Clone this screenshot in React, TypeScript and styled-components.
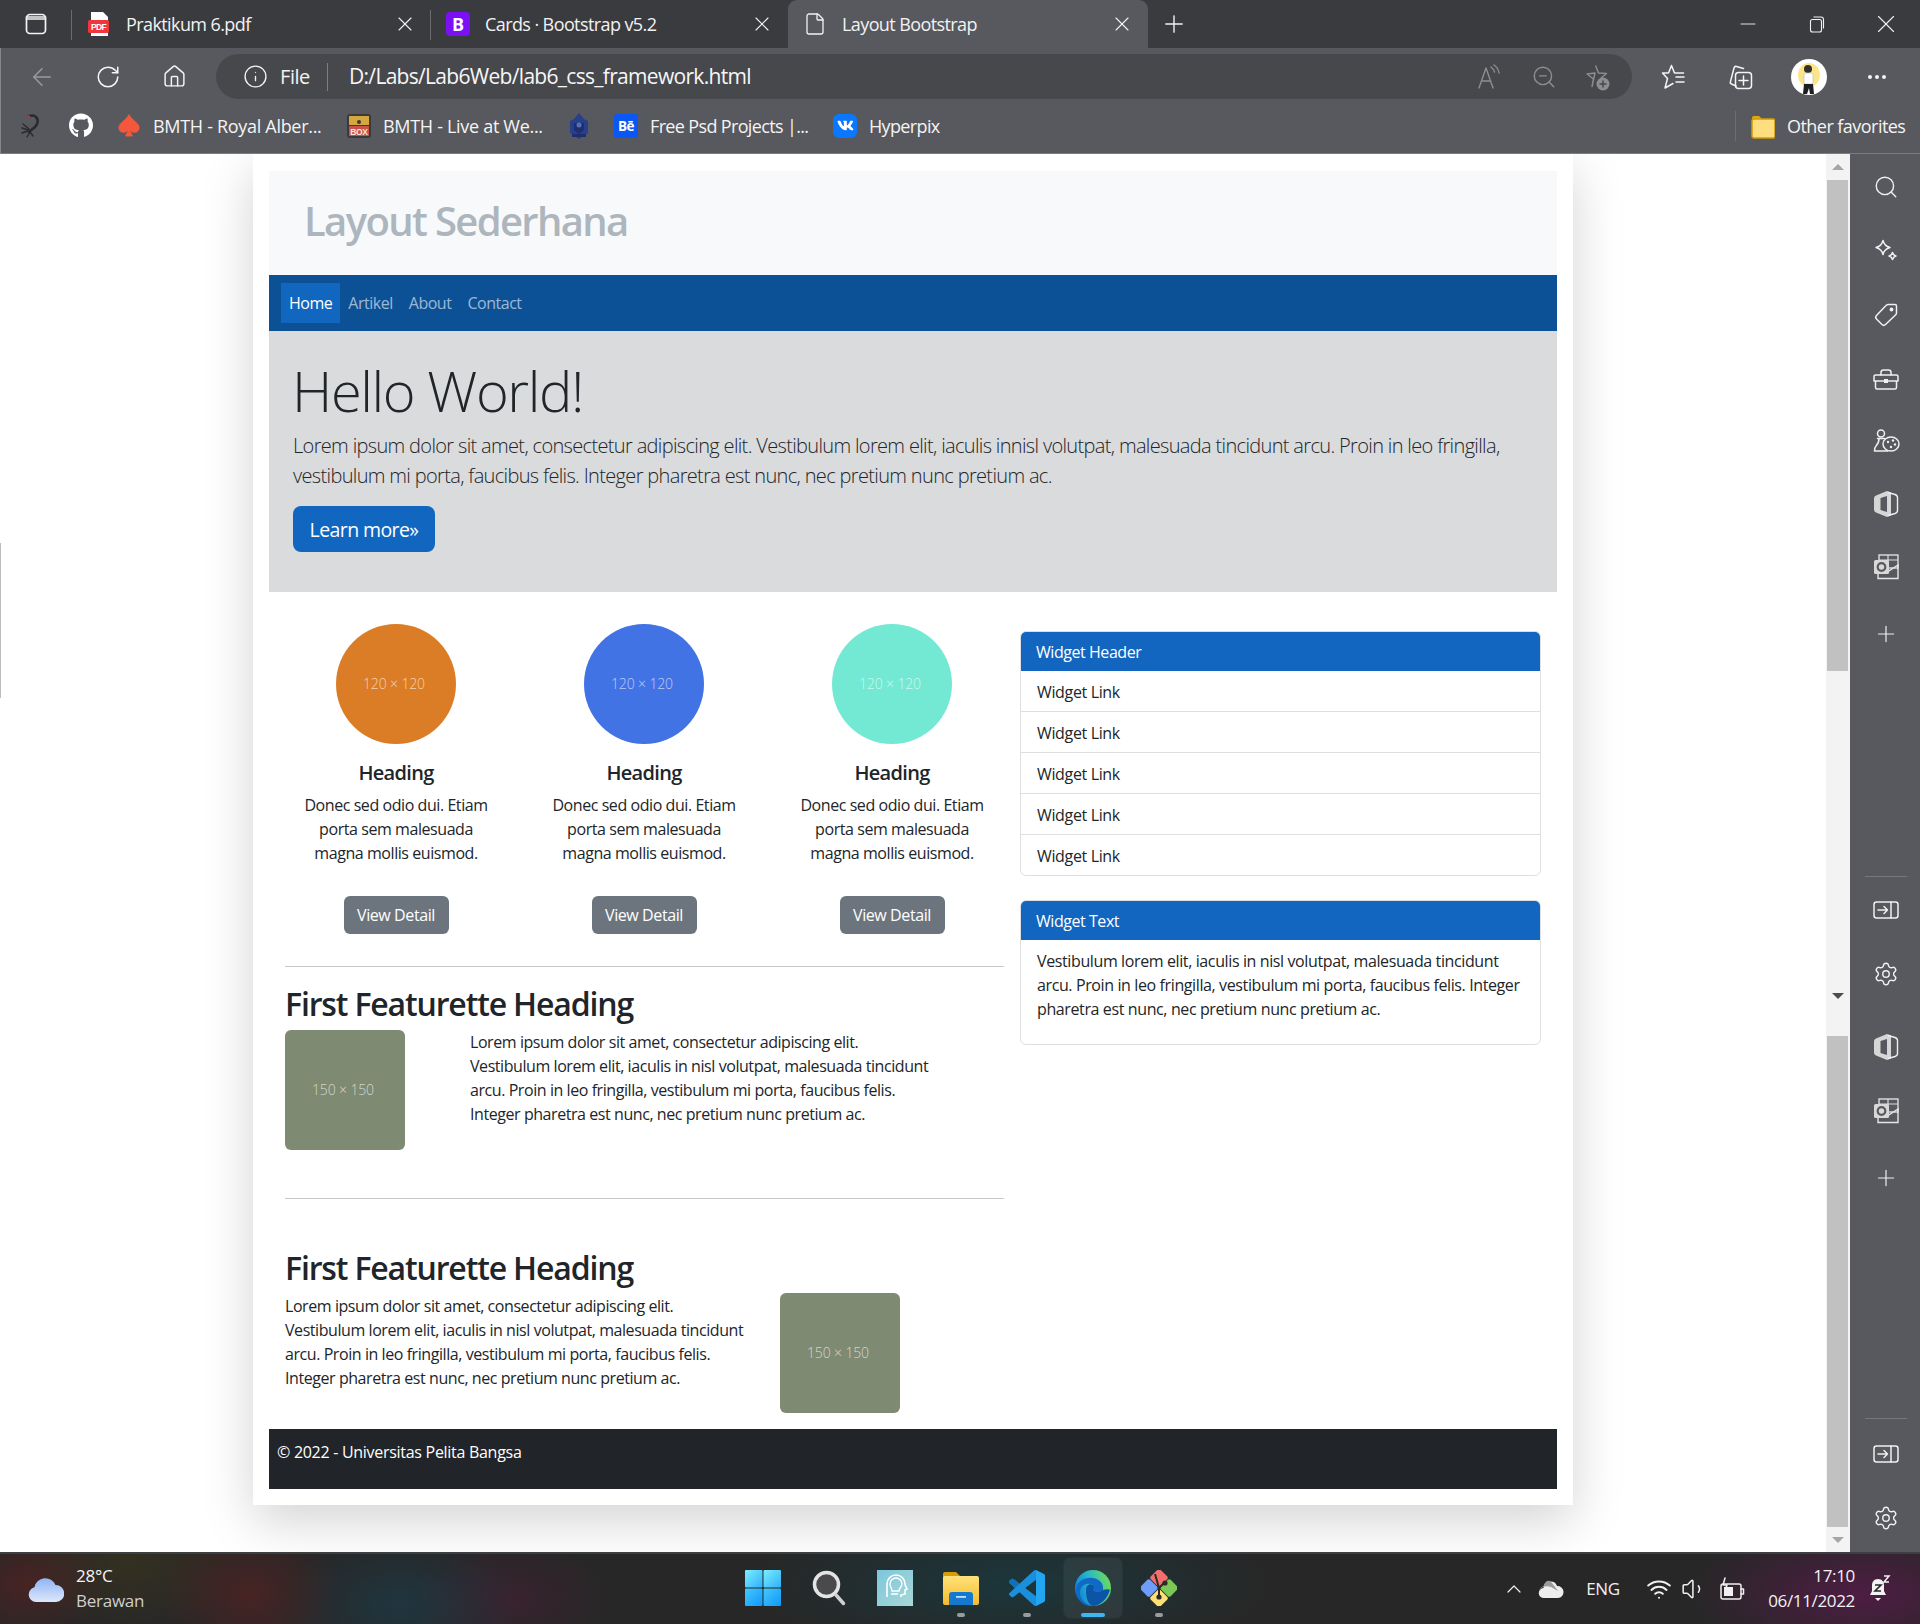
import React from "react";
import styled, { createGlobalStyle } from "styled-components";
import { ArrowLeft, RotateCw, Home, Info, Search, ZoomOut, X, Plus, File as FileIcon, Minus, Settings, ChevronUp, Wifi, Volume1, MoreHorizontal } from "lucide-react";
import { FaGithub, FaVk } from "react-icons/fa";
import { BsSuitSpadeFill } from "react-icons/bs";

const UI = `"Open Sans", "Noto Sans", "Liberation Sans", sans-serif`;

const Global = createGlobalStyle`
  html, body { margin: 0; padding: 0; background: #fff; }
  body { font-family: ${UI}; color: #212529; font-size: 16px; line-height: 24px; letter-spacing: -0.027em; }
  * { box-sizing: border-box; }
`;

const Frame = styled.div`
  width: 1920px; height: 1624px; display: flex; flex-direction: column; overflow: hidden; position: relative;
`;

/* ---------- tab strip ---------- */
const TabStrip = styled.div`
  height: 48px; flex: none; display: flex; align-items: stretch; background: #3a3b3f; color: #f2f2f2;
`;
const TabToggle = styled.div`
  width: 72px; flex: none; display: flex; align-items: center; justify-content: center; padding-right: 1px; position: relative;
  &::after { content: ""; position: absolute; right: 0; top: 10px; height: 30px; width: 1px; background: #6a6b6f; }
`;
const Tab = styled.div<{ $w: number; $active?: boolean; $sep?: boolean }>`
  width: ${p => p.$w}px; flex: none; display: flex; align-items: center; gap: 15px; padding: 0 14px 0 15px; position: relative;
  font-size: 18px; letter-spacing: -0.033em;
  background: ${p => (p.$active ? "#58595e" : "transparent")};
  border-radius: ${p => (p.$active ? "9px 9px 0 0" : "0")};
  ${p => p.$sep ? `&::after { content: ""; position: absolute; right: 0; top: 10px; height: 30px; width: 1px; background: #6a6b6f; }` : ""}
`;
const TabIconBox = styled.span`
  width: 24px; height: 26px; flex: none; display: flex; align-items: center; justify-content: center;
`;
const BootstrapMark = styled.span`
  width: 24px; height: 24px; border-radius: 4px; background: #7b10f5; color: #fff; font-weight: 700; font-size: 18px;
  display: flex; align-items: center; justify-content: center; letter-spacing: 0;
`;
const TabClose = styled.span`
  margin-left: auto; display: flex;
`;
const NewTab = styled.div`
  width: 52px; flex: none; display: flex; align-items: center; justify-content: center; margin-left: 0;
`;
const WindowControls = styled.div`
  margin-left: auto; display: flex;
`;
const WinBtn = styled.div`
  width: 69px; display: flex; align-items: center; justify-content: center;
`;

/* ---------- address row ---------- */
const AddressRow = styled.div`
  height: 54px; flex: none; display: flex; align-items: flex-start; padding: 6px 0 0 9px; background: #58595e; color: #fff;
  box-shadow: inset 1px 0 0 #85868a;
`;
const NavBtn = styled.div<{ $dim?: boolean }>`
  width: 66px; height: 45px; flex: none; display: flex; align-items: center; justify-content: center;
  color: ${p => (p.$dim ? "#9a9b9e" : "#f4f4f4")};
`;
const AddressBar = styled.div`
  width: 1416px; height: 45px; flex: none; margin-left: 9px; margin-right: 7px; border-radius: 23px; background: #47484c;
  display: flex; align-items: center; padding: 0 8px 0 27px;
`;
const SiteInfo = styled.div`
  display: flex; align-items: center; gap: 12px; font-size: 20px; color: #f2f2f2; width: 85px; height: 28px; border-right: 1px solid #7d7e81;
`;
const Url = styled.div`
  margin: 0 0 2px 21px; font-size: 21px; letter-spacing: -0.033em; color: #f6f6f6; white-space: nowrap;
`;
const BarActions = styled.div`
  margin-left: auto; display: flex;
`;
const BarAction = styled.div`
  width: 53.5px; height: 45px; display: flex; align-items: center; justify-content: center; color: #8d8e91;
`;
const ToolBtn = styled.div`
  width: 68px; height: 45px; flex: none; display: flex; align-items: center; justify-content: center; color: #f4f4f4;
`;

/* ---------- favourites ---------- */
const BookmarkBar = styled.div`
  height: 52px; flex: none; display: flex; align-items: center; padding: 0 0 4px 19px; background: #58595e; color: #f4f4f4;
  font-size: 18px; letter-spacing: -0.017em; border-bottom: 1px solid #7c7d80; box-shadow: inset 1px 0 0 #85868a;
`;
const Bookmark = styled.div<{ $w: number; $tight?: boolean }>`
  width: ${p => p.$w}px; flex: none; display: flex; align-items: center; gap: 12px; white-space: nowrap;
  ${p => (p.$tight ? "letter-spacing: -0.036em;" : "")}
`;
const BookmarkIcon = styled.span`
  width: 24px; height: 26px; flex: none; display: flex; align-items: center; justify-content: center;
`;
const OtherFavorites = styled.div`
  margin-left: auto; width: 185px; display: flex; align-items: center; gap: 12px; letter-spacing: -0.03em; white-space: nowrap;
`;
const BarDivider = styled.span`
  width: 1px; height: 30px; background: #6d6e72; margin-right: 3px;
`;

/* ---------- middle ---------- */
const Middle = styled.div`
  flex: 1; min-height: 0; display: flex;
`;
const Viewport = styled.div`
  width: 1826px; flex: none; overflow: hidden; background: #fff; position: relative;
`;
const EdgeMark = styled.div`
  position: absolute; left: 0; top: 389px; width: 1px; height: 155px; background: #bdbdbd;
`;
const Container = styled.div`
  width: 1320px; margin: 0 auto; padding: 17px 16px 16px; background: #fff; box-shadow: 0 16px 48px rgba(0,0,0,.175);
`;
const Header = styled.header`
  height: 104px; background: #f8f9fa; padding: 0 0 0 36px; display: flex; align-items: center;
`;
const Brand = styled.h1`
  margin: 0 0 4px -1px; font-size: 40px; line-height: 48px; font-weight: 600; color: #adb5bd; letter-spacing: -0.041em;
`;
const NavBar = styled.nav`
  height: 56px; background: #0c5096; display: flex; align-items: center; padding-left: 12px;
`;
const NavLink = styled.a<{ $active?: boolean }>`
  height: 40px; padding: 0 8px; display: flex; align-items: center; font-size: 16px; letter-spacing: -0.03em;
  color: ${p => (p.$active ? "#fff" : "rgba(255,255,255,.6)")};
  background: ${p => (p.$active ? "#1166c0" : "transparent")};
`;
const Hero = styled.section`
  height: 261px; background: #dadbdd; padding: 26px 24px 0;
`;
const HeroTitle = styled.h1`
  margin: 0 0 0 -1px; font-size: 56px; line-height: 67px; font-weight: 300; letter-spacing: -0.025em;
`;
const Lead = styled.p`
  margin: 7px 0 15px; font-size: 20px; line-height: 30px; font-weight: 300; letter-spacing: -0.033em; white-space: nowrap;
`;
const LearnMore = styled.a`
  width: 142px; height: 46px; padding-top: 2px; border-radius: 8px; background: #1166c0; color: #fff; font-size: 19.5px; letter-spacing: -0.03em;
  display: flex; align-items: center; justify-content: center;
`;
const Content = styled.div`
  display: flex; align-items: flex-start;
`;
const MainColumn = styled.div`
  width: 751px; flex: none; padding: 32px 16px 0;
`;
const Marketing = styled.div`
  display: grid; grid-template-columns: repeat(3, 248px); margin-left: -13px; width: 744px;
`;
const MarketingCol = styled.div`
  display: flex; flex-direction: column; align-items: center; text-align: center;
`;
const Circle = styled.div<{ $bg: string }>`
  width: 120px; height: 120px; border-radius: 50%; background: ${p => p.$bg}; display: flex; align-items: center; justify-content: center;
`;
const PlaceholderText = styled.span`
  font-size: 14px; font-weight: 300; color: rgba(255,255,255,.66); padding-right: 4px; letter-spacing: -0.01em;
`;
const ColHeading = styled.h5`
  margin: 17px 0 8px; font-size: 20px; line-height: 24px; font-weight: 600; letter-spacing: -0.035em;
`;
const ColText = styled.p`
  margin: 0; white-space: nowrap;
`;
const DetailBtn = styled.a`
  margin-top: 31px; width: 105px; height: 38px; border-radius: 6px; background: #6c757d; color: #fff;
  display: flex; align-items: center; justify-content: center; letter-spacing: -0.025em; font-size: 16px;
`;
const Rule = styled.hr<{ $top: number }>`
  margin: ${p => p.$top}px 0 0; border: 0; height: 1px; background: #c8c8c8;
`;
const FeatHeading = styled.h2<{ $top: number; $bottom: number }>`
  margin: ${p => p.$top}px 0 ${p => p.$bottom}px; font-size: 32px; line-height: 38px; font-weight: 600; letter-spacing: -0.036em;
`;
const Feature = styled.div`
  display: flex; align-items: flex-start;
`;
const FeatureImage = styled.div<{ $mr?: number }>`
  width: 120px; height: 120px; flex: none; border-radius: 6px; background: #7f8a72; display: flex; align-items: center; justify-content: center;
  margin-right: ${p => p.$mr ?? 0}px;
`;
const FeatureText = styled.p<{ $w?: number; $mt?: number }>`
  margin: ${p => p.$mt ?? 0}px 0 0; white-space: nowrap; width: ${p => (p.$w ? p.$w + "px" : "auto")}; flex: none;
`;
const SideColumn = styled.aside`
  width: 521px; flex: none; padding-top: 39px;
`;
const Card = styled.div`
  border: 1px solid #dedfe0; border-radius: 6px; overflow: hidden; margin-bottom: 24px; background: #fff;
`;
const CardHeader = styled.div`
  height: 40px; margin: -1px -1px 0; background: #1266bf; color: #fff; display: flex; align-items: center; padding: 2px 0 0 16px;
  font-size: 16px; letter-spacing: -0.028em;
`;
const CardRow = styled.div`
  height: 41px; display: flex; align-items: center; padding: 2px 0 0 16px; border-top: 1px solid #dedfe0; font-size: 16px; letter-spacing: -0.022em;
  &:nth-child(2) { border-top: 0; height: 40px; }
`;
const CardBody = styled.div`
  padding: 9px 16px 23px; white-space: nowrap; letter-spacing: -0.024em;
`;
const Footer = styled.footer`
  height: 60px; margin-top: 16px; background: #212529; color: #fff; padding: 11px 8px 0; letter-spacing: -0.018em; font-size: 16px;
`;

/* ---------- scrollbar & side bar ---------- */
const Scrollbar = styled.div`
  width: 24px; flex: none; display: flex; flex-direction: column; align-items: center; background: #f3f3f3; padding-right: 1px;
`;
const ScrollEnd = styled.div<{ $h: number }>`
  height: ${p => p.$h}px; flex: none; display: flex; align-items: center; justify-content: center;
`;
const ScrollThumb = styled.div`
  width: 21px; height: 491px; flex: none; background: #c1c1c1;
`;
const ScrollGap = styled.div`
  height: 365px; flex: none; display: flex; align-items: flex-end; padding-bottom: 37px;
`;
const Arrow = styled.span<{ $up?: boolean; $dark?: boolean }>`
  width: 0; height: 0; border-left: 6px solid transparent; border-right: 6px solid transparent;
  ${p => (p.$up ? "border-bottom" : "border-top")}: 6px solid ${p => (p.$dark ? "#4c4c4c" : "#a6a6a6")};
`;
const SideBar = styled.div`
  width: 70px; flex: none; background: #58595e; display: flex; flex-direction: column; align-items: center; padding: 1px 0 5px 1px; color: #f0f0f0;
`;
const SideItem = styled.div<{ $h?: number }>`
  height: ${p => p.$h ?? 64}px; flex: none; display: flex; align-items: center; justify-content: center;
`;
const SideRule = styled.div<{ $auto?: boolean; $top?: number }>`
  width: 42px; height: 1px; flex: none; background: #77787c; margin-top: ${p => (p.$auto ? "auto" : (p.$top ?? 0) + "px")};
`;

/* ---------- taskbar ---------- */
const Taskbar = styled.div`
  height: 72px; flex: none; display: flex; color: #fff; border-top: 2px solid #3d4042;
  background:
    radial-gradient(ellipse 80px 60px at 25px 30px, rgba(110,30,30,.45), transparent),
    radial-gradient(ellipse 90px 70px at 250px 40px, rgba(120,30,30,.4), transparent),
    radial-gradient(ellipse 110px 70px at 130px 10px, rgba(80,70,20,.3), transparent),
    radial-gradient(ellipse 120px 70px at 400px 50px, rgba(20,75,100,.4), transparent),
    radial-gradient(ellipse 100px 60px at 510px 45px, rgba(90,25,60,.35), transparent),
    radial-gradient(ellipse 260px 70px at 1010px 30px, rgba(15,70,80,.5), transparent),
    radial-gradient(ellipse 170px 70px at 1860px 40px, rgba(110,20,90,.55), transparent),
    #272727;
`;
const Weather = styled.div`
  width: 730px; flex: none; display: flex; align-items: center; gap: 12px; padding-left: 28px;
`;
const WeatherText = styled.div`
  font-size: 17px; line-height: 25px; letter-spacing: -0.015em; color: #f4f4f4; margin-bottom: 3px;
`;
const WeatherSub = styled.div`
  color: #cfcfcf;
`;
const TaskIcons = styled.div`
  display: flex; width: 462px; flex: none;
`;
const TaskSlot = styled.div<{ $on?: boolean }>`
  width: 66px; height: 60px; margin-top: 4px; flex: none; position: relative; display: flex; align-items: center; justify-content: center;
  ${p => (p.$on ? "background: rgba(255,255,255,.06); border-radius: 6px; width: 58px; margin-left: 4px; margin-right: 4px; box-shadow: 0 0 0 1px rgba(255,255,255,.03);" : "")}
`;
const RunDot = styled.span<{ $on?: boolean }>`
  position: absolute; bottom: 1px; left: 50%; transform: translateX(-50%); height: 4px; border-radius: 2px;
  width: ${p => (p.$on ? "24px" : "8px")}; background: ${p => (p.$on ? "#3fb6f4" : "#9a9c9c")};
`;
const Tray = styled.div`
  margin-left: auto; width: 420px; display: flex; flex: none; align-items: center;
`;
const TraySlot = styled.div<{ $w: number }>`
  width: ${p => p.$w}px; flex: none; display: flex; align-items: center; justify-content: center; font-size: 17px; letter-spacing: -0.02em; color: #f0f0f0;
  & > svg { flex: none; }
`;
const Clock = styled.div`
  width: 93px; flex: none; text-align: right; font-size: 17px; line-height: 25px; letter-spacing: -0.02em; color: #f2f2f2; margin-bottom: 2px;
`;

/* ---------- drawn icons ---------- */
const sw = { fill: "none", stroke: "currentColor", strokeWidth: 1.5, strokeLinecap: "round" as const, strokeLinejoin: "round" as const };

const TabsIcon = () => (
  <svg width="24" height="24" viewBox="0 0 24 24" {...sw} strokeWidth={1.7}><rect x="2.5" y="2.5" width="19" height="19" rx="3.5" /><path d="M2.5 7h19M2.5 5h19" /></svg>
);
const PdfIcon = () => (
  <svg width="24" height="26" viewBox="0 0 24 26"><path d="M4 1h12l5 5v19H4z" fill="#fff" /><rect x="1" y="9" width="21" height="13" rx="1.5" fill="#f0363c" /><text x="11.5" y="19" fontSize="8.5" fontWeight="700" fontFamily="Liberation Sans, sans-serif" textAnchor="middle" fill="#fff">PDF</text></svg>
);
const RestoreIcon = () => (
  <svg width="18" height="18" viewBox="0 0 18 18" fill="none" stroke="#f2f2f2" strokeWidth="1.1"><rect x="2.5" y="4.5" width="11" height="12.5" rx="2" /><path d="M5.5 2h7.5a2.5 2.5 0 0 1 2.5 2.5v9" /></svg>
);
const ReadAloudIcon = () => (
  <svg width="28" height="28" viewBox="0 0 28 28" {...sw} strokeWidth={1.4}><path d="M3 25 10 5l7 20M5.5 18h9" /><path d="M15 4c2 1.500 3 3 3.500 5M18 2c3 2 4.500 4 5 8" /></svg>
);
const StarAddIcon = () => (
  <svg width="28" height="28" viewBox="0 0 28 28" fill="none" stroke="currentColor" strokeWidth="1.4" strokeLinejoin="round"><path d="M12.500 2.500 15.500 10l8 .5-6 5 1 3M9 23.500l1.500-7.500-6.500-5 8-1z" /><circle cx="20" cy="21" r="6.500" fill="currentColor" stroke="none" /><path d="M20 17.500v7M16.500 21h7" stroke="#47484c" strokeWidth="1.500" /></svg>
);
const FavoritesIcon = () => (
  <svg width="28" height="28" viewBox="0 0 28 28" {...sw}><path d="M12.500 2.500 15.500 10h9M17 14h8M17 19h8M12.500 2.500 9.500 10H3.500l5 5.500L6 25l8-4.500" /></svg>
);
const CollectionsIcon = () => (
  <svg width="28" height="28" viewBox="0 0 28 28" {...sw}><path d="M9 23 4.500 21c-1-.5-1.500-1.500-1-2.500L7 5c.3-1 1.500-1.800 2.500-1.500l7 2" /><rect x="8.500" y="9.500" width="16" height="16" rx="3" /><path d="M16.500 13v9M12 17.500h9" /></svg>
);
const Avatar = () => (
  <svg width="36" height="36" viewBox="0 0 36 36"><circle cx="18" cy="18" r="18" fill="#fff" /><ellipse cx="18" cy="16" rx="11" ry="12" fill="#fbe58a" /><circle cx="17" cy="10" r="4" fill="#33302e" /><rect x="13" y="14" width="9" height="11" rx="2" fill="#fff" stroke="#bbb" strokeWidth=".6" /><path d="M13 25h9l1 10h-4l-1-6-2 6h-4z" fill="#1d1d22" /></svg>
);
const ScorpionIcon = () => (
  <svg width="24" height="26" viewBox="0 0 24 26" fill="none" stroke="#2a2a2c" strokeLinecap="round"><path d="M10 3c7-2 10 3 8 8s-6 5-8 8" strokeWidth="2.600" /><path d="M3 15l6 2M3 20l6-2M8 24l3-5M14 23l-3-4M4 11l6 5" strokeWidth="1.400" /><circle cx="10" cy="3.500" r="1" fill="#e0443c" stroke="none" /></svg>
);
const BoxIcon = () => (
  <svg width="24" height="26" viewBox="0 0 24 26"><rect x="0" y="1" width="24" height="24" rx="3" fill="#3b3a38" /><rect x="2" y="3" width="20" height="9" fill="#d3a83e" /><rect x="2" y="13" width="20" height="10" fill="#c9514a" /><text x="12" y="22" textAnchor="middle" fontSize="8.500" fontWeight="700" fontFamily="Liberation Sans, sans-serif" fill="#f5e9d5">BOX</text><circle cx="12" cy="9" r="2" fill="#3b3a38" /></svg>
);
const EmblemIcon = () => (
  <svg width="24" height="26" viewBox="0 0 24 26"><path d="M12 0l5 6 4 2v12l-9 6-9-6V8l4-2z" fill="#27408b" /><path d="M7 10h10v7l-5 4-5-4z" fill="#1f2f6e" /><circle cx="12" cy="12" r="2.500" fill="#5c6fb0" /><path d="M5 21h14v3H5z" fill="#1f2f6e" /></svg>
);
const BehanceMark = styled.span`
  width: 24px; height: 24px; border-radius: 3px; background: #0a57f5; color: #fff; font-size: 13.500px; font-weight: 700; letter-spacing: -0.03em;
  display: flex; align-items: center; justify-content: center;
`;
const VkMark = styled.span`
  width: 24px; height: 24px; border-radius: 6px; background: #0a77ff; color: #fff; display: flex; align-items: center; justify-content: center;
`;
const FolderIcon = () => (
  <svg width="24" height="26" viewBox="0 0 24 26"><path d="M1 5a2 2 0 0 1 2-2h5l3 3v3H1z" fill="#e2a80e" /><rect x="1" y="6" width="23" height="19" rx="2" fill="#ffde7f" stroke="#cf9a09" strokeWidth="1.500" /></svg>
);
const SparkleIcon = () => (
  <svg width="26" height="26" viewBox="0 0 26 26" {...sw}><path d="M10 2.500c1 4 3 6 7 7-4 1-6 3-7 7-1-4-3-6-7-7 4-1 6-3 7-7z" /><path d="M19.500 14.500c.5 2 1.500 3 3.500 3.500-2 .5-3 1.500-3.500 3.500-.5-2-1.500-3-3.500-3.500 2-.5 3-1.500 3.500-3.500z" /></svg>
);
const TagIcon = () => (
  <svg width="26" height="26" viewBox="0 0 26 26" {...sw}><path d="M15 2.500h7a1.500 1.500 0 0 1 1.500 1.500v7a3 3 0 0 1-1 2L12.500 22.500a2.500 2.500 0 0 1-3.500 0L3.500 17a2.500 2.500 0 0 1 0-3.500L13 3.500a3 3 0 0 1 2-1z" /><circle cx="18.500" cy="7.500" r="1.200" fill="currentColor" /></svg>
);
const ToolboxIcon = () => (
  <svg width="28" height="26" viewBox="0 0 28 26" {...sw}><path d="M2 10.500a1.500 1.500 0 0 1 1.500-1.500h21a1.500 1.500 0 0 1 1.500 1.500V15H2zM3.500 15v6.500a1.500 1.500 0 0 0 1.500 1.500h18a1.500 1.500 0 0 0 1.500-1.500V15" /><path d="M9 9V6.500A2.500 2.500 0 0 1 11.500 4h5A2.500 2.500 0 0 1 19 6.500V9" /><rect x="12" y="13" width="4" height="4" fill="currentColor" stroke="none" /></svg>
);
const GamesIcon = () => (
  <svg width="28" height="26" viewBox="0 0 28 26" {...sw}><circle cx="9" cy="5.500" r="3.500" /><path d="M5.500 10.500h7M7 10.500c0 3.500-1 5.500-3 7.500-1 1-1.500 2.500-1.500 5h13" /><ellipse cx="19" cy="16" rx="8" ry="7" /><circle cx="16" cy="14" r="1.200" fill="currentColor" stroke="none" /><circle cx="21" cy="12.500" r="1.200" fill="currentColor" stroke="none" /><circle cx="23" cy="16.500" r="1.200" fill="currentColor" stroke="none" /><circle cx="19" cy="19" r="1.200" fill="currentColor" stroke="none" /></svg>
);
const OfficeIcon = () => (
  <svg width="26" height="28" viewBox="0 0 26 28"><path d="M14 1 3 5.500c-1 .4-2 1.500-2 3v11c0 1.500 1 2.600 2 3L14 27l4-1.500V2.500z" fill="#d6d6d6" /><path d="M14 6 7.500 8v12L14 22z" fill="#58595e" /><path d="M15 2.500 22 4.500c1.500.5 2.500 1.500 2.500 3v13c0 1.500-1 2.500-2.500 3l-7 2" fill="none" stroke="#f0f0f0" strokeWidth="1.400" /></svg>
);
const OutlookIcon = () => (
  <svg width="26" height="26" viewBox="0 0 26 26"><rect x="6" y="1" width="19" height="13" fill="none" stroke="#ddd" strokeWidth="1.400" /><path d="M15 1v8M6 6h19" stroke="#ddd" strokeWidth="1.200" /><path d="M5 16v8.500h20V11l-10 6.500z" fill="none" stroke="#e6e6e6" strokeWidth="1.400" /><rect x="1" y="6" width="15" height="14" rx="1.500" fill="#d8d8d8" /><circle cx="8.500" cy="13" r="3.800" fill="none" stroke="#58595e" strokeWidth="2.200" /></svg>
);
const PanelIcon = () => (
  <svg width="26" height="20" viewBox="0 0 26 20" {...sw}><rect x="1" y="2" width="24" height="16" rx="2.500" /><path d="M18 2v16M5 10h9M11 6.500l3.500 3.500-3.500 3.500" /></svg>
);
const CloudWeather = () => (
  <svg width="36" height="30" viewBox="0 0 36 30"><defs><linearGradient id="cw" x1="0" y1="0" x2="0" y2="1"><stop offset="0" stopColor="#8fb4f5" /><stop offset="1" stopColor="#dde8fb" /></linearGradient></defs><path d="M8 28a7.500 7.500 0 0 1-1.500-14.800A11 11 0 0 1 27.500 11 8.500 8.500 0 0 1 28 28z" fill="url(#cw)" /></svg>
);
const WinLogo = () => (
  <svg width="36" height="36" viewBox="0 0 36 36"><defs><linearGradient id="w1" x1="0" y1="0" x2="1" y2="1" gradientUnits="objectBoundingBox"><stop offset="0" stopColor="#7beeff" /><stop offset="1" stopColor="#2fb0f8" /></linearGradient><linearGradient id="w2" x1="0" y1="0" x2="1" y2="1"><stop offset="0" stopColor="#45c8fb" /><stop offset="1" stopColor="#0f98fa" /></linearGradient></defs><rect x="0" y="0" width="17.500" height="17.500" rx="1" fill="url(#w1)" /><rect x="18.500" y="0" width="17.500" height="17.500" rx="1" fill="url(#w1)" /><rect x="0" y="18.500" width="17.500" height="17.500" rx="1" fill="url(#w2)" /><rect x="18.500" y="18.500" width="17.500" height="17.500" rx="1" fill="url(#w2)" /></svg>
);
const SearchTask = () => (
  <svg width="34" height="36" viewBox="0 0 34 36" fill="none"><circle cx="14.500" cy="14.500" r="12" fill="#4a4a4c" stroke="#e4e4e4" strokeWidth="3.500" /><path d="M24 25l7.500 8.500" stroke="#d0d0d0" strokeWidth="3.500" strokeLinecap="round" /></svg>
);
const NotesTask = () => (
  <svg width="36" height="36" viewBox="0 0 36 36" fill="none"><defs><linearGradient id="nt" x1="0" y1="0" x2="1" y2="1"><stop offset="0" stopColor="#7cc6de" /><stop offset="1" stopColor="#a9d8d6" /></linearGradient></defs><rect width="36" height="36" fill="url(#nt)" /><path d="M10 27V14a9 9 0 0 1 18 0c0 2 2 4 2 5l-2 1v4l-4 1v2" stroke="#fff" strokeWidth="1.600" /><path d="M14 24h7M15 21c0-3-2-4-2-7a6 6 0 0 1 12 0c0 3-3 4-3 7z" stroke="#fff" strokeWidth="1.400" /></svg>
);
const FolderTask = () => (
  <svg width="36" height="36" viewBox="0 0 36 36"><defs><linearGradient id="ft" x1="0" y1="0" x2="0" y2="1"><stop offset="0" stopColor="#ffe27a" /><stop offset="1" stopColor="#f6bb2e" /></linearGradient></defs><path d="M0 4a2 2 0 0 1 2-2h11l4 4v6H0z" fill="#d99e07" /><path d="M0 8a2 2 0 0 1 2-2h32a2 2 0 0 1 2 2v25a2 2 0 0 1-2 2H2a2 2 0 0 1-2-2z" fill="url(#ft)" /><path d="M6 35V25a3 3 0 0 1 3-3h18a3 3 0 0 1 3 3v10z" fill="#1778cf" /><rect x="13" y="26" width="10" height="1.800" fill="#bfe0ff" /></svg>
);
const CodeTask = () => (
  <svg width="36" height="36" viewBox="0 0 100 100"><path fillRule="evenodd" d="M70.900 99.300a6.200 6.200 0 0 0 4.900-.2l20.600-9.900a6.200 6.200 0 0 0 3.600-5.600V16.400a6.200 6.200 0 0 0-3.600-5.600L75.800.9a6.200 6.200 0 0 0-7.100 1.200L29.400 38 12.200 25a4.200 4.200 0 0 0-5.300.2l-5.500 5a4.200 4.200 0 0 0 0 6.200L16.300 50 1.400 63.600a4.200 4.200 0 0 0 0 6.200l5.500 5a4.200 4.200 0 0 0 5.300.2l17.200-13 39.300 35.900a6.200 6.200 0 0 0 2.200 1.400zM75 27.300 45.100 50 75 72.700z" fill="#1c8fdc" /><path d="M75 0.500 75.800.9l20.600 9.900a6.200 6.200 0 0 1 3.600 5.600v67.200a6.200 6.200 0 0 1-3.600 5.600l-20.600 9.900-.8.400z" fill="#22a6f2" /><path d="M12.200 25a4.200 4.200 0 0 0-5.300.2l-5.500 5a4.200 4.200 0 0 0 0 6.200L16.300 50l13-12z" fill="#0f6fb8" /></svg>
);
const EdgeTask = () => (
  <svg width="38" height="38" viewBox="0 0 38 38"><defs><linearGradient id="e1" x1="0" y1="0.600" x2="1" y2="0.300"><stop offset="0" stopColor="#0f7ed8" /><stop offset="0.450" stopColor="#27b6cf" /><stop offset="1" stopColor="#6fdc55" /></linearGradient></defs><circle cx="19" cy="19" r="18" fill="url(#e1)" /><path d="M2 21C3 11 12 8 19 9c7 1 11 6 10 12-3 2-8 2-10 0 2-1 2-3 0-5-4-3-12-1-13 6-1 7 5 14 13 15-9 1-17-6-17-16z" fill="#1069c4" /><path d="M12 21c0-5 4-7 7-5 2 2 2 4 0 5 2 2 7 2 10 0 3-1 6-1 7 0-3 10-11 16-17 16-5-1-7-8-7-16z" fill="#0c55a6" /></svg>
);
const GitTask = () => (
  <svg width="36" height="36" viewBox="0 0 36 36"><g transform="rotate(45 18 18)"><rect x="4" y="4" width="13.500" height="13.500" rx="2" fill="#f36f6b" /><rect x="18.500" y="4" width="13.500" height="13.500" rx="2" fill="#7cc855" /><rect x="4" y="18.500" width="13.500" height="13.500" rx="2" fill="#6f9dfb" /><rect x="18.500" y="18.500" width="13.500" height="13.500" rx="2" fill="#ffe074" /></g><path d="M14 4l4 14 5-5M18 18v9" stroke="#2d2a2a" strokeWidth="2" fill="none" /><circle cx="24" cy="13" r="2.600" fill="#2d2a2a" /><circle cx="18" cy="27" r="2.600" fill="#2d2a2a" /></svg>
);
const OneDriveTray = () => (
  <svg width="26" height="22" viewBox="0 0 26 22"><path d="M6 20a5 5 0 0 1-.5-10A7 7 0 0 1 19 8a6 6 0 0 1 1 12z" fill="#eee" /><path d="M1 13C3 9 8 7 13 9l7 4-6-8C11 1 7 3 5.500 8 3 9 1.500 11 1 13z" fill="#9b9b9b" /></svg>
);
const BatteryTray = () => (
  <svg width="28" height="26" viewBox="0 0 28 26" {...sw}><rect x="3" y="8" width="20" height="15" rx="2" /><path d="M23 13h2.500v5H23" /><rect x="6" y="11" width="9" height="9" fill="currentColor" stroke="none" /><path d="M7 2 5 9h4l-2 6" strokeWidth="1.500" /></svg>
);
const BellTray = () => (
  <svg width="26" height="30" viewBox="0 0 26 30" fill="none"><path d="M12 5c-4 0-6 3-6 6v6l-2 4h16l-2-4v-6c0-3-2-6-6-6z" fill="#f2f2f2" /><path d="M9 24h6l-3 3z" fill="#f2f2f2" /><path d="M9 11h6l-6 6h6" stroke="#272727" strokeWidth="1.600" /><path d="M18 2h5l-5 6h5" stroke="#f2f2f2" strokeWidth="1.500" /></svg>
);

const lorem = (
  <>Lorem ipsum dolor sit amet, consectetur adipiscing elit.<br />Vestibulum lorem elit, iaculis in nisl volutpat, malesuada tincidunt<br />arcu. Proin in leo fringilla, vestibulum mi porta, faucibus felis.<br />Integer pharetra est nunc, nec pretium nunc pretium ac.</>
);

const circles = ["#db7d26", "#4173e4", "#73e9d4"];

export default function App() {
  return (
    <Frame>
      <Global />
      <TabStrip>
        <TabToggle><TabsIcon /></TabToggle>
        <Tab $w={359} $sep>
          <TabIconBox><PdfIcon /></TabIconBox>Praktikum 6.pdf
          <TabClose><X size={24} strokeWidth={1.1} /></TabClose>
        </Tab>
        <Tab $w={357}>
          <TabIconBox><BootstrapMark>B</BootstrapMark></TabIconBox>Cards · Bootstrap v5.2
          <TabClose><X size={24} strokeWidth={1.1} /></TabClose>
        </Tab>
        <Tab $w={360} $active>
          <TabIconBox><FileIcon size={24} strokeWidth={1.3} /></TabIconBox>Layout Bootstrap
          <TabClose><X size={24} strokeWidth={1.1} /></TabClose>
        </Tab>
        <NewTab><Plus size={28} strokeWidth={1.2} /></NewTab>
        <WindowControls>
          <WinBtn><Minus size={24} strokeWidth={.9} /></WinBtn>
          <WinBtn><RestoreIcon /></WinBtn>
          <WinBtn><X size={30} strokeWidth={.9} /></WinBtn>
        </WindowControls>
      </TabStrip>

      <AddressRow>
        <NavBtn $dim><ArrowLeft size={28} strokeWidth={1.3} /></NavBtn>
        <NavBtn><RotateCw size={26} strokeWidth={1.4} /></NavBtn>
        <NavBtn><Home size={25} strokeWidth={1.4} /></NavBtn>
        <AddressBar>
          <SiteInfo><Info size={25} strokeWidth={1.3} />File</SiteInfo>
          <Url>D:/Labs/Lab6Web/lab6_css_framework.html</Url>
          <BarActions>
            <BarAction><ReadAloudIcon /></BarAction>
            <BarAction><ZoomOut size={26} strokeWidth={1.3} /></BarAction>
            <BarAction><StarAddIcon /></BarAction>
          </BarActions>
        </AddressBar>
        <ToolBtn><FavoritesIcon /></ToolBtn>
        <ToolBtn><CollectionsIcon /></ToolBtn>
        <ToolBtn><Avatar /></ToolBtn>
        <ToolBtn><MoreHorizontal size={24} strokeWidth={2} /></ToolBtn>
      </AddressRow>

      <BookmarkBar>
        <Bookmark $w={50}><BookmarkIcon><ScorpionIcon /></BookmarkIcon></Bookmark>
        <Bookmark $w={48}><BookmarkIcon><FaGithub size={25} color="#fff" /></BookmarkIcon></Bookmark>
        <Bookmark $w={230}><BookmarkIcon><BsSuitSpadeFill size={24} color="#f4573c" /></BookmarkIcon>BMTH - Royal Alber...</Bookmark>
        <Bookmark $w={220}><BookmarkIcon><BoxIcon /></BookmarkIcon>BMTH - Live at We...</Bookmark>
        <Bookmark $w={47}><BookmarkIcon><EmblemIcon /></BookmarkIcon></Bookmark>
        <Bookmark $w={219} $tight><BookmarkIcon><BehanceMark>Bē</BehanceMark></BookmarkIcon>Free Psd Projects |...</Bookmark>
        <Bookmark $w={120} $tight><BookmarkIcon><VkMark><FaVk size={17} /></VkMark></BookmarkIcon>Hyperpix</Bookmark>
        <OtherFavorites><BarDivider /><BookmarkIcon><FolderIcon /></BookmarkIcon>Other favorites</OtherFavorites>
      </BookmarkBar>

      <Middle>
        <Viewport>
          <EdgeMark />
          <Container>
            <Header><Brand>Layout Sederhana</Brand></Header>
            <NavBar>
              <NavLink $active>Home</NavLink>
              <NavLink>Artikel</NavLink>
              <NavLink>About</NavLink>
              <NavLink>Contact</NavLink>
            </NavBar>
            <Hero>
              <HeroTitle>Hello World!</HeroTitle>
              <Lead>Lorem ipsum dolor sit amet, consectetur adipiscing elit. Vestibulum lorem elit, iaculis innisl volutpat, malesuada tincidunt arcu. Proin in leo fringilla,<br />vestibulum mi porta, faucibus felis. Integer pharetra est nunc, nec pretium nunc pretium ac.</Lead>
              <LearnMore>Learn more»</LearnMore>
            </Hero>
            <Content>
              <MainColumn>
                <Marketing>
                  {circles.map(c => (
                    <MarketingCol key={c}>
                      <Circle $bg={c}><PlaceholderText>120 × 120</PlaceholderText></Circle>
                      <ColHeading>Heading</ColHeading>
                      <ColText>Donec sed odio dui. Etiam<br />porta sem malesuada<br />magna mollis euismod.</ColText>
                      <DetailBtn>View Detail</DetailBtn>
                    </MarketingCol>
                  ))}
                </Marketing>
                <Rule $top={32} />
                <FeatHeading $top={18} $bottom={7}>First Featurette Heading</FeatHeading>
                <Feature>
                  <FeatureImage $mr={65}><PlaceholderText>150 × 150</PlaceholderText></FeatureImage>
                  <FeatureText>{lorem}</FeatureText>
                </Feature>
                <Rule $top={48} />
                <FeatHeading $top={50} $bottom={6}>First Featurette Heading</FeatHeading>
                <Feature>
                  <FeatureText $w={495} $mt={1}>{lorem}</FeatureText>
                  <FeatureImage><PlaceholderText>150 × 150</PlaceholderText></FeatureImage>
                </Feature>
              </MainColumn>
              <SideColumn>
                <Card>
                  <CardHeader>Widget Header</CardHeader>
                  {[1, 2, 3, 4, 5].map(i => <CardRow key={i}>Widget Link</CardRow>)}
                </Card>
                <Card>
                  <CardHeader>Widget Text</CardHeader>
                  <CardBody>Vestibulum lorem elit, iaculis in nisl volutpat, malesuada tincidunt<br />arcu. Proin in leo fringilla, vestibulum mi porta, faucibus felis. Integer<br />pharetra est nunc, nec pretium nunc pretium ac.</CardBody>
                </Card>
              </SideColumn>
            </Content>
            <Footer>© 2022 - Universitas Pelita Bangsa</Footer>
          </Container>
        </Viewport>
        <Scrollbar>
          <ScrollEnd $h={26}><Arrow $up /></ScrollEnd>
          <ScrollThumb />
          <ScrollGap><Arrow $dark /></ScrollGap>
          <ScrollThumb />
          <ScrollEnd $h={25}><Arrow /></ScrollEnd>
        </Scrollbar>
        <SideBar>
          <SideItem><Search size={26} strokeWidth={1.3} /></SideItem>
          <SideItem><SparkleIcon /></SideItem>
          <SideItem><TagIcon /></SideItem>
          <SideItem $h={63}><ToolboxIcon /></SideItem>
          <SideItem $h={62}><GamesIcon /></SideItem>
          <SideItem $h={63}><OfficeIcon /></SideItem>
          <SideItem><OutlookIcon /></SideItem>
          <SideItem $h={70}><Plus size={26} strokeWidth={1.1} /></SideItem>
          <SideRule $top={207} />
          <SideItem $h={65}><PanelIcon /></SideItem>
          <SideItem><Settings size={26} strokeWidth={1.3} /></SideItem>
          <SideItem $h={81}><OfficeIcon /></SideItem>
          <SideItem $h={48}><OutlookIcon /></SideItem>
          <SideItem $h={86}><Plus size={26} strokeWidth={1.1} /></SideItem>
          <SideRule $auto />
          <SideItem $h={70}><PanelIcon /></SideItem>
          <SideItem $h={58}><Settings size={26} strokeWidth={1.3} /></SideItem>
        </SideBar>
      </Middle>

      <Taskbar>
        <Weather>
          <CloudWeather />
          <WeatherText>28°C<WeatherSub>Berawan</WeatherSub></WeatherText>
        </Weather>
        <TaskIcons>
          <TaskSlot><WinLogo /></TaskSlot>
          <TaskSlot><SearchTask /></TaskSlot>
          <TaskSlot><NotesTask /></TaskSlot>
          <TaskSlot><FolderTask /><RunDot /></TaskSlot>
          <TaskSlot><CodeTask /><RunDot /></TaskSlot>
          <TaskSlot $on><EdgeTask /><RunDot $on /></TaskSlot>
          <TaskSlot><GitTask /><RunDot /></TaskSlot>
        </TaskIcons>
        <Tray>
          <TraySlot $w={28}><ChevronUp size={24} strokeWidth={1.2} /></TraySlot>
          <TraySlot $w={46}><OneDriveTray /></TraySlot>
          <TraySlot $w={58}>ENG</TraySlot>
          <TraySlot $w={54}><Wifi size={26} strokeWidth={1.8} /></TraySlot>
          <TraySlot $w={16}><Volume1 size={26} strokeWidth={1.4} /></TraySlot>
          <TraySlot $w={60}><BatteryTray /></TraySlot>
          <Clock>17:10<br />06/11/2022</Clock>
          <TraySlot $w={48}><BellTray /></TraySlot>
        </Tray>
      </Taskbar>
    </Frame>
  );
}
